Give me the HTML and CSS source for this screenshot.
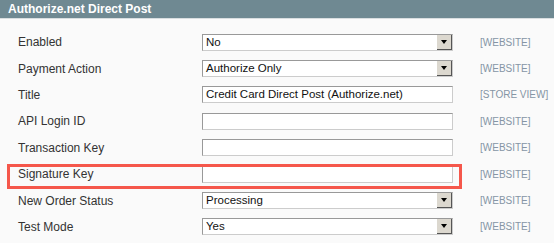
FILE: index.html
```html
<!DOCTYPE html>
<html lang="en">
<head>
    <meta charset="UTF-8">
    <title>Authorize.net Direct Post</title>
    <link rel="stylesheet" href="styles.css">
</head>
<body>
    <div class="section">
        <div class="section-head">Authorize.net Direct Post</div>
        <div class="form-list">
            <div class="row">
                <label class="label">Enabled</label>
                <div class="select"><span class="value">No</span><span class="arrow"></span></div>
                <span class="scope">[WEBSITE]</span>
            </div>
            <div class="row">
                <label class="label">Payment Action</label>
                <div class="select"><span class="value">Authorize Only</span><span class="arrow"></span></div>
                <span class="scope">[WEBSITE]</span>
            </div>
            <div class="row">
                <label class="label">Title</label>
                <div class="input">Credit Card Direct Post (Authorize.net)</div>
                <span class="scope">[STORE VIEW]</span>
            </div>
            <div class="row">
                <label class="label">API Login ID</label>
                <div class="input"></div>
                <span class="scope">[WEBSITE]</span>
            </div>
            <div class="row">
                <label class="label">Transaction Key</label>
                <div class="input"></div>
                <span class="scope">[WEBSITE]</span>
            </div>
            <div class="row highlight">
                <label class="label">Signature Key</label>
                <div class="input"></div>
                <span class="scope">[WEBSITE]</span>
            </div>
            <div class="row">
                <label class="label">New Order Status</label>
                <div class="select"><span class="value">Processing</span><span class="arrow"></span></div>
                <span class="scope">[WEBSITE]</span>
            </div>
            <div class="row">
                <label class="label">Test Mode</label>
                <div class="select"><span class="value">Yes</span><span class="arrow"></span></div>
                <span class="scope">[WEBSITE]</span>
            </div>
        </div>
    </div>
</body>
</html>
```

FILE: styles.css
```css
body {
    margin: 0;
    background-color: #fafafa;
    font-family: 'Liberation Sans', Arial, sans-serif;
    font-size: 12px;
    color: #333;
}

.section-head {
    height: 18px;
    line-height: 18px;
    padding-left: 8px;
    background-color: #6f8992;
    color: #fff;
    font-weight: bold;
    border-bottom: 1px solid #d9dee0;
}

.form-list {
    padding: 10px 0 0 18px;
}

.row {
    position: relative;
    display: grid;
    grid-template-columns: 184px 278px auto;
    align-items: center;
    height: 26.4px;
}

.label {
    font-size: 12px;
}

.highlight::before {
    content: "";
    position: absolute;
    left: -11px;
    top: 3px;
    width: 449px;
    height: 19px;
    border: 3px solid #f5574b;
}

.select,
.input {
    height: 15px;
    line-height: 15px;
    background-color: #fff;
    border: 1px solid #aaa;
    border-color: #999 #ccc #ccc #999;
    padding: 0 3px;
    color: #111;
    font-size: 11.5px;
    white-space: nowrap;
    overflow: hidden;
}

.select {
    position: relative;
    width: 243px;
}

.input {
    width: 243px;
}

.arrow {
    position: absolute;
    right: 0;
    top: 0;
    width: 14px;
    height: 14px;
    background-color: #dcd8cf;
    border-right: 1px solid #555;
    border-bottom: 1px solid #555;
}

.arrow::after {
    content: "";
    position: absolute;
    left: 4px;
    top: 5px;
    border-left: 3px solid transparent;
    border-right: 3px solid transparent;
    border-top: 4px solid #000;
}

.scope {
    font-size: 10px;
    color: #8595a5;
}
```
